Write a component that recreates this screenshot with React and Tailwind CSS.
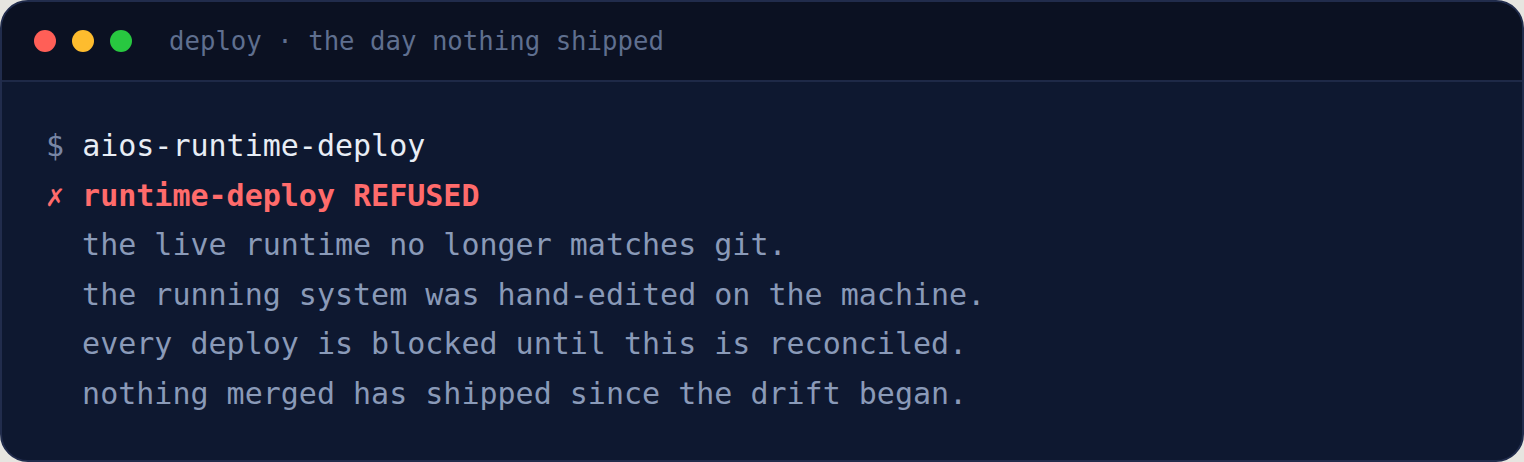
export default function App() {
  const mono = { fontFamily: '"DejaVu Sans Mono", "Liberation Mono", monospace' };
  const lines = [
    "the live runtime no longer matches git.",
    "the running system was hand-edited on the machine.",
    "every deploy is blocked until this is reconciled.",
    "nothing merged has shipped since the drift began.",
  ];
  return (
    <div className="w-[1524px] h-[462px] bg-[#e6e5e0]">
      <div
        className="h-full rounded-[28px] border-2 border-[#212c4c] bg-[#0e1830] overflow-hidden flex flex-col"
        style={mono}
      >
        <div className="h-[80px] shrink-0 bg-[#0b1122] border-b-2 border-[#1e2947] flex items-center pl-[32px]">
          <div className="flex gap-[16px]">
            <span className="w-[22px] h-[22px] rounded-full bg-[#ff5f57]" />
            <span className="w-[22px] h-[22px] rounded-full bg-[#febc2e]" />
            <span className="w-[22px] h-[22px] rounded-full bg-[#28c840]" />
          </div>
          <span className="ml-[37px] mt-[2px] text-[25.7px] leading-none text-[#5f6f8f] whitespace-pre">
            deploy · the day nothing shipped
          </span>
        </div>
        <div className="pl-[44px] pt-[39px] text-[30px] leading-[49.5px] whitespace-pre">
          <div>
            <span className="text-[#7886a5]">$ </span>
            <span className="text-[#e8edf5]">aios-runtime-deploy</span>
          </div>
          <div className="font-bold text-[#ff6b6b]">
            <span className="font-normal">✗</span> runtime-deploy REFUSED
          </div>
          {lines.map((l) => (
            <div key={l} className="text-[#8a9ab8]">
              {"  " + l}
            </div>
          ))}
        </div>
      </div>
    </div>
  );
}
